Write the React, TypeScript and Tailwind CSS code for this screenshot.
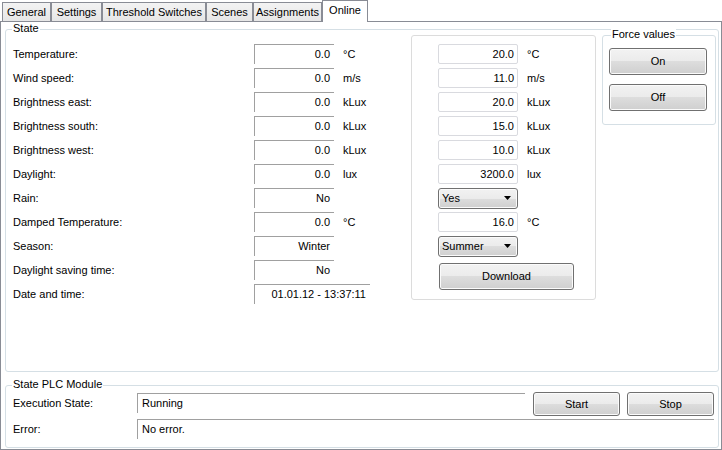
const tabs = [
  { name: "General", w: "w-[49px]" },
  { name: "Settings", w: "w-[51px]" },
  { name: "Threshold Switches", w: "w-[104px]" },
  { name: "Scenes", w: "w-[47px]" },
  { name: "Assignments", w: "w-[69px]" },
];

const stateRows = [
  { label: "Temperature:", value: "0.0", unit: "°C" },
  { label: "Wind speed:", value: "0.0", unit: "m/s" },
  { label: "Brightness east:", value: "0.0", unit: "kLux" },
  { label: "Brightness south:", value: "0.0", unit: "kLux" },
  { label: "Brightness west:", value: "0.0", unit: "kLux" },
  { label: "Daylight:", value: "0.0", unit: "lux" },
  { label: "Rain:", value: "No", unit: "" },
  { label: "Damped Temperature:", value: "0.0", unit: "°C" },
  { label: "Season:", value: "Winter", unit: "" },
  { label: "Daylight saving time:", value: "No", unit: "" },
  { label: "Date and time:", value: "01.01.12 - 13:37:11", unit: "", wide: true },
];

type ForceRow = { kind: "input"; value: string; unit: string } | { kind: "combo"; value: string };

const forceRows: ForceRow[] = [
  { kind: "input", value: "20.0", unit: "°C" },
  { kind: "input", value: "11.0", unit: "m/s" },
  { kind: "input", value: "20.0", unit: "kLux" },
  { kind: "input", value: "15.0", unit: "kLux" },
  { kind: "input", value: "10.0", unit: "kLux" },
  { kind: "input", value: "3200.0", unit: "lux" },
  { kind: "combo", value: "Yes" },
  { kind: "input", value: "16.0", unit: "°C" },
  { kind: "combo", value: "Summer" },
];

// Win7 style push button face
const btn =
  "flex items-center justify-center rounded-[3px] border border-[#707070] shadow-[inset_0_0_0_1px_#fbfbfb] bg-[linear-gradient(#f2f2f2_0%,#ebebeb_50%,#dddddd_50%,#cfcfcf_100%)] text-black";

function GroupTitle({ text, left }: { text: string; left: string }) {
  return (
    <span className={`absolute -top-[8px] ${left} px-[1px] bg-white leading-[13px]`}>{text}</span>
  );
}

function ReadBox({ value, w, align }: { value: string; w: string; align: string }) {
  return (
    <div className={`${w} h-[20px] border-t border-l border-[#a0a0a0] flex items-center ${align} overflow-hidden whitespace-nowrap`}>
      {value}
    </div>
  );
}

function Combo({ value }: { value: string }) {
  return (
    <div className={`${btn} !justify-between w-[80px] h-[21px] pl-[3px] pr-[6px]`}>
      <span>{value}</span>
      <svg width="7" height="4" viewBox="0 0 7 4">
        <path d="M0 0H7L3.5 4Z" fill="#000" />
      </svg>
    </div>
  );
}

export default function App() {
  return (
    <div className="w-[722px] h-[450px] bg-white text-black text-[11px] font-['Liberation_Sans',Arial,sans-serif] overflow-hidden">
      {/* tab strip */}
      <div className="h-[21px] flex items-end pl-[2px]">
        {tabs.map((t) => (
          <div
            key={t.name}
            className={`${t.w} h-[19px] border-t border-l border-r border-[#898c95] bg-[linear-gradient(#f3f3f3,#e6e6e6)] flex items-center justify-center leading-none whitespace-nowrap`}
          >
            {t.name}
          </div>
        ))}
        <div className="relative z-10 w-[46px] h-[22px] -mb-px border-t border-l border-r border-[#898c95] bg-white flex justify-center pt-[4px] leading-none">
          Online
        </div>
      </div>

      {/* tab page */}
      <div className="w-[722px] h-[429px] border border-[#898c95] bg-white pl-[4px] pt-[7px]">
        {/* State group */}
        <div className="relative w-[714px] h-[343px] border border-[#d5dfe5] rounded-[3px] flex items-start">
          <GroupTitle text="State" left="left-[6px]" />

          <div className="ml-[7px] mt-[14px] w-[398px] flex flex-col">
            {stateRows.map((r) => (
              <div key={r.label} className="h-[20px] mb-[4px] flex items-center">
                <span className="w-[241px]">{r.label}</span>
                <ReadBox value={r.value} w={r.wide ? "w-[116px]" : "w-[80px]"} align="justify-end pr-[4px]" />
                {r.unit && <span className="ml-[9px]">{r.unit}</span>}
              </div>
            ))}
          </div>

          <div className="mt-[5px] w-[185px] h-[265px] border border-[#dcdcdc] rounded-[3px] pl-[26px] pt-[8px] flex flex-col">
            {forceRows.map((r, i) => (
              <div key={i} className="h-[20px] mb-[4px] flex items-center">
                {r.kind === "input" ? (
                  <>
                    <div className="w-[80px] h-[20px] border border-[#d9dadf] rounded-[2px] flex items-center justify-end pr-[3px]">
                      {r.value}
                    </div>
                    <span className="ml-[9px]">{r.unit}</span>
                  </>
                ) : (
                  <Combo value={r.value} />
                )}
              </div>
            ))}
            <button className={`${btn} ml-[1px] mt-[3px] w-[135px] h-[27px] text-[11px]`}>Download</button>
          </div>

          <div className="relative ml-[6px] mt-[5px] w-[114px] h-[90px] border border-[#d5dfe5] rounded-[3px] pl-[6px] pt-[12px] flex flex-col gap-[9px]">
            <GroupTitle text="Force values" left="left-[8px]" />
            <button className={`${btn} w-[98px] h-[27px] text-[11px]`}>On</button>
            <button className={`${btn} w-[98px] h-[27px] text-[11px]`}>Off</button>
          </div>
        </div>

        {/* State PLC Module group */}
        <div className="relative mt-[13px] w-[714px] h-[63px] border border-[#d5dfe5] rounded-[3px] pl-[7px] pt-[6px]">
          <GroupTitle text="State PLC Module" left="left-[6px]" />
          <div className="h-[27px] flex items-start">
            <span className="w-[124px] h-[20px] mt-[1px] flex items-center">Execution State:</span>
            <div className="mt-[1px]">
              <ReadBox value="Running" w="w-[388px]" align="pl-[4px]" />
            </div>
            <button className={`${btn} ml-[8px] w-[87px] h-[24px] text-[11px]`}>Start</button>
            <button className={`${btn} ml-[7px] w-[87px] h-[24px] text-[11px]`}>Stop</button>
          </div>
          <div className="h-[20px] flex items-center">
            <span className="w-[124px]">Error:</span>
            <ReadBox value="No error." w="w-[577px]" align="pl-[4px]" />
          </div>
        </div>
      </div>
    </div>
  );
}
